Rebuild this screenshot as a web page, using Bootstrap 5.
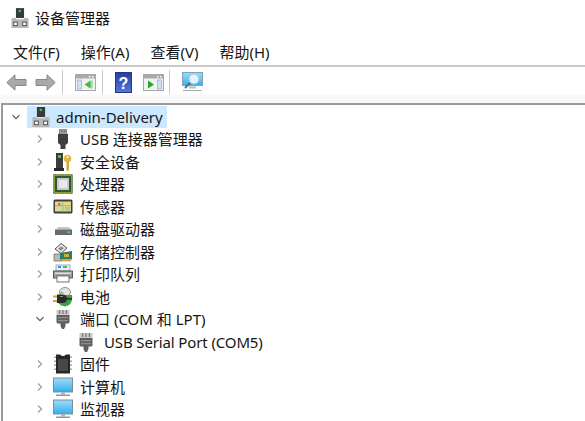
<!doctype html>
<html lang="zh"><head><meta charset="utf-8">
<link href="https://cdn.jsdelivr.net/npm/bootstrap@5.3.0/dist/css/bootstrap.min.css" rel="stylesheet">
<style>
html,body{margin:0;height:421px;overflow:hidden;background:#fff}
body{font-family:"Noto Sans","Noto Sans CJK SC",sans-serif;color:#151515;font-size:15px;line-height:22px}
.titlebar{height:35px;padding-left:11px;gap:6px;font-size:15px}
.menubar{height:32px;padding-left:13px;padding-top:3px;gap:21px;font-size:15px;border-bottom:2px solid #c9c9c9}
.toolbar{height:28px;padding-left:6px;padding-top:2px}
.tool-gap{width:1px;height:24px;background:#c8c8c8}
.band{background:#f9f9f9;height:8px}
.treebox{margin-left:1px;border-top:2px solid #9a9a9a;border-left:2px solid #9a9a9a;height:320px;overflow:hidden;background:#fff;padding-top:.6px}
.treerow{height:22.5px;white-space:nowrap}
.chev{width:10px;height:10px;flex:none}
.lvl0{padding-left:8px}
.lvl1{padding-left:32px}
.lvl2{padding-left:73px}
.ico{flex:none;display:block}
.t-next{margin-left:8px;transform:scaleX(-1)}
.t-g1{margin-left:6px}
.t-a{margin-left:12px}
.t-g2{margin-left:6px}
.t-b{margin-left:11px}
.t-g3{margin-left:5px}
.slot{flex:none;width:20px;height:20px;display:block}
.lvl1 .slot{margin-left:8px}
.lbl{margin-left:7px}
.lvl2 .lbl{margin-left:8px;letter-spacing:-.13px}
.rootlbl{background:#cce8ff;height:22px;margin-left:6px;padding:0 4px;gap:5px}
</style></head><body>
<svg width="0" height="0" class="position-absolute">
<defs>
<linearGradient id="gm" x1="0" y1="0" x2="0" y2="1"><stop offset="0" stop-color="#9fdcfa"/><stop offset="1" stop-color="#35aeed"/></linearGradient>
<linearGradient id="gh" x1="0" y1="0" x2="0" y2="1"><stop offset="0" stop-color="#2a3f9e"/><stop offset="1" stop-color="#4f77d8"/></linearGradient>
<symbol id="host" viewBox="0 0 20 22"><path d="M5.500 0h9v11h-9z" fill="#3a3a3a"/><rect x="8.500" y="2" width="2.500" height="2.500" fill="#35d04a"/><path d="M1.500 11h4v1.500h9V11h4l1 1v10H.5V12z" fill="#b9b9b9"/><rect x="3" y="15.500" width="4" height="4" fill="#fff" stroke="#444"/><rect x="13" y="15.500" width="4" height="4" fill="#fff" stroke="#444"/></symbol>
<symbol id="usb" viewBox="0 0 20 20"><rect x="6.500" y="0" width="7" height="5" fill="#a8a8a8" stroke="#666" stroke-width=".7"/><rect x="8" y="1.500" width="1.500" height="1.500" fill="#555"/><rect x="10.700" y="1.500" width="1.500" height="1.500" fill="#555"/><path d="M5 5h10v9l-2.500 2v4h-5v-4L5 14z" fill="#3f3f3f"/></symbol>
<symbol id="sec" viewBox="0 0 20 20"><path d="M3 1h7v15H3z" fill="#3b3b3b"/><path d="M1 16h10v3H1z" fill="#2a2a2a"/><rect x="5" y="3" width="3" height="3" fill="#35d04a"/><circle cx="14.500" cy="6.500" r="3.800" fill="#e3b544"/><circle cx="14.500" cy="5" r="1" fill="#fff"/><path d="M13.500 9h2.400v9l-1.200 1.500-1.200-1.500z" fill="#d5a12f"/></symbol>
<symbol id="cpu" viewBox="0 0 20 20"><rect x=".5" y=".5" width="19" height="19" fill="#8a9a3c" stroke="#5d7a2f" stroke-dasharray="1 .6"/><rect x="2" y="2" width="16" height="16" fill="#2c5a33"/><rect x="4" y="4" width="12" height="12" fill="#c9c9c9"/><rect x="6" y="6" width="8" height="8" fill="#e8e8e8"/></symbol>
<symbol id="sensor" viewBox="0 0 20 20"><rect x=".5" y="2.500" width="19" height="14" rx="1.500" fill="#3f3f3f"/><rect x="2" y="4.500" width="16" height="10" fill="#e2d98c"/><path d="M2 8h16v1.200H2zM9 4.500h1.300v10H9z" fill="#9ac48c"/><rect x="5" y="6" width="2.500" height="2.500" fill="#e86a5f"/><rect x="12" y="10" width="5" height="3.500" fill="#9ccf9a"/></symbol>
<symbol id="disk" viewBox="0 0 20 20"><path d="M3 10.500Q3.500 8 6 8h9q2.500 0 3 2.500z" fill="#c4c4c4"/><path d="M2 10.500h17v5.500H2z" fill="#6a6a6a"/><rect x="14" y="12.300" width="3" height="1.800" fill="#3fd84e"/></symbol>
<symbol id="store" viewBox="0 0 20 20"><path d="M2 7l6-5.500L14 6l-6 5.500z" fill="#e5e5e5" stroke="#555"/><path d="M5 7l3-2.500L11 6l-3 2.500z" fill="#888"/><path d="M1 12h8v7H1z" fill="#b8b8b8" stroke="#666" stroke-width=".7"/><path d="M7 11l12-2v8.500H7z" fill="#29806a"/><rect x="11" y="12" width="5" height="3" fill="#d9a63a"/><path d="M8 17.500h10v1.800H8z" fill="#c9a34a"/></symbol>
<symbol id="printer" viewBox="0 0 20 20"><rect x="3" y="1" width="14" height="6" fill="#e9f0f6" stroke="#6d8aa5" stroke-width=".7"/><rect x="5" y="2" width="3" height="2" fill="#3a8de0"/><rect x="10" y="2" width="4" height="2" fill="#51b85f"/><rect x=".5" y="7" width="19" height="7" fill="#9c9c9c" stroke="#3f3f3f" stroke-width=".8"/><rect x="4" y="12" width="12" height="6" fill="#fff" stroke="#555" stroke-width=".8"/><rect x="2" y="8.500" width="16" height="1.500" fill="#dcdcdc"/></symbol>
<symbol id="batt" viewBox="0 0 20 20"><ellipse cx="12" cy="5" rx="5.500" ry="4.500" fill="#e4e4e4" stroke="#777" stroke-width=".8"/><path d="M4 8h15Q20.500 18 12 19.500 3 18 4 8z" fill="#38a23c"/><path d="M6 6.500l3-2 2 2z" fill="#55c25a"/><path d="M0 8.500h5v2H0zM0 13h5v2H0z" fill="#d3a43c"/><path d="M4 7.500h5q5 0 5 4.300t-5 4.300H4z" fill="#2a2a2a"/><path d="M14 11h5v1.600h-5z" fill="#2a2a2a"/><path d="M7 9h3v1H7z" fill="#888"/></symbol>
<symbol id="port" viewBox="0 0 20 20"><rect x="3.500" y="1" width="13" height="5" fill="#c9c9c9"/><path d="M6.200 1h1v4h-1zM9.500 1h1v4h-1zM12.800 1h1v4h-1z" fill="#666"/><path d="M3.500 6h13v7.500l-1 1H12.500v2.500L11 20H9l-1.500-3v-2.500H4.500l-1-1z" fill="#5f5f5f"/><rect x="5" y="8" width="10" height="1.300" fill="#8d8d8d"/><rect x="5" y="11" width="10" height="1.300" fill="#8d8d8d"/></symbol>
<symbol id="chip" viewBox="0 0 20 20"><path d="M3 .5h4q3 3 6 0h4v19H3z" fill="#262626"/><path d="M1 2.500h2v1.500H1zM1 6.500h2V8H1zM1 10.500h2V12H1zM1 14.500h2V16H1zM17 2.500h2v1.500h-2zM17 6.500h2V8h-2zM17 10.500h2V12h-2zM17 14.500h2V16h-2z" fill="#aaa"/><rect x="5" y="5" width="10" height="12" fill="#474747"/></symbol>
<symbol id="mon" viewBox="0 0 20 19"><rect x=".5" y=".5" width="19" height="14" fill="url(#gm)" stroke="#7b8f9d"/><path d="M8 15h4v2H8z" fill="#aab3ba"/><path d="M3 17h14v1.500H3z" fill="#8a9aa5"/></symbol>
<symbol id="win-l" viewBox="0 0 21 17"><rect x=".5" y=".5" width="20" height="16" fill="#f2f2f2" stroke="#a8a8a8"/><rect x="1" y="1" width="19" height="3.500" fill="#a9a9a9"/><rect x="14" y="2" width="1.500" height="1.500" fill="#fff"/><rect x="17" y="2" width="1.500" height="1.500" fill="#fff"/><rect x="2.500" y="6" width="4" height="9" fill="#cfe2f5" stroke="#7b98b8" stroke-width=".5"/><path d="M15 6.500h3v8h-3z" fill="#a9e0a9"/><path d="M15.500 6.500v8l-6-4z" fill="#3dbb3d"/></symbol>
<symbol id="win-r" viewBox="0 0 21 17"><rect x=".5" y=".5" width="20" height="16" fill="#f2f2f2" stroke="#a8a8a8"/><rect x="1" y="1" width="19" height="3.500" fill="#a9a9a9"/><rect x="14" y="2" width="1.500" height="1.500" fill="#fff"/><rect x="17" y="2" width="1.500" height="1.500" fill="#fff"/><rect x="14.500" y="6" width="4" height="9" fill="#cfe2f5" stroke="#7b98b8" stroke-width=".5"/><path d="M5 6.500v8l6-4z" fill="#27a827"/></symbol>
<symbol id="scan" viewBox="0 0 21 20"><rect x=".5" y=".5" width="20" height="13" fill="url(#gm)" stroke="#7da4bd"/><circle cx="12" cy="7" r="5" fill="#e2f4fc" stroke="#a9c6d6" stroke-width="1"/><path d="M8 11l-5 5" stroke="#666" stroke-width="1.800"/><path d="M7 14.500h7v2H7z" fill="#b5bcc2"/><path d="M1 18h19v1H1z" fill="#a3adb5"/></symbol>
<symbol id="arrow" viewBox="0 0 21 17"><path d="M.8 8.500L9 .8v4.700h11v6H9v4.700z" fill="#a9a9a9" stroke="#888"/></symbol>
<symbol id="chevr" viewBox="0 0 10 10"><path d="M3 1.500L6.500 5 3 8.500" fill="none" stroke="#a0a0a0" stroke-width="1.300"/></symbol>
<symbol id="chevd" viewBox="0 0 10 10"><path d="M1.500 3.200L5 6.700l3.500-3.500" fill="none" stroke="#555" stroke-width="1.200"/></symbol>
</defs></svg>

<header class="titlebar d-flex align-items-center">
<svg class="ico" width="18" height="20"><use href="#host"/></svg><span>设备管理器</span></header>
<nav class="menubar d-flex align-items-center"><span>文件(F)</span><span>操作(A)</span><span>查看(V)</span><span>帮助(H)</span></nav>
<div class="toolbar d-flex align-items-center">
<svg class="ico" width="21" height="17"><use href="#arrow"/></svg>
<svg class="ico t-next" width="21" height="17"><use href="#arrow"/></svg>
<span class="tool-gap t-g1"></span>
<svg class="ico t-a" width="21" height="17"><use href="#win-l"/></svg>
<span class="tool-gap t-g2"></span>
<svg class="ico t-a" width="17" height="21" viewBox="0 0 17 21"><rect width="17" height="21" fill="#223690"/><rect x="1" y="1" width="15" height="19" fill="url(#gh)"/><text x="8.500" y="16.500" text-anchor="middle" font-size="16" font-weight="700" fill="#fff" font-family="Liberation Sans,sans-serif">?</text></svg>
<svg class="ico t-b" width="21" height="17"><use href="#win-r"/></svg>
<span class="tool-gap t-g3"></span>
<svg class="ico t-a" width="21" height="20"><use href="#scan"/></svg>
</div>
<div class="band"></div>
<main class="treebox">
<div class="treerow lvl0 d-flex align-items-center"><svg class="chev"><use href="#chevd"/></svg><div class="rootlbl d-flex align-items-center"><svg class="slot"><use href="#host"/></svg><span>admin-Delivery</span></div></div>
<div class="treerow lvl1 d-flex align-items-center"><svg class="chev"><use href="#chevr"/></svg><svg class="slot"><use href="#usb"/></svg><span class="lbl">USB 连接器管理器</span></div>
<div class="treerow lvl1 d-flex align-items-center"><svg class="chev"><use href="#chevr"/></svg><svg class="slot"><use href="#sec"/></svg><span class="lbl">安全设备</span></div>
<div class="treerow lvl1 d-flex align-items-center"><svg class="chev"><use href="#chevr"/></svg><svg class="slot"><use href="#cpu"/></svg><span class="lbl">处理器</span></div>
<div class="treerow lvl1 d-flex align-items-center"><svg class="chev"><use href="#chevr"/></svg><svg class="slot"><use href="#sensor"/></svg><span class="lbl">传感器</span></div>
<div class="treerow lvl1 d-flex align-items-center"><svg class="chev"><use href="#chevr"/></svg><svg class="slot"><use href="#disk"/></svg><span class="lbl">磁盘驱动器</span></div>
<div class="treerow lvl1 d-flex align-items-center"><svg class="chev"><use href="#chevr"/></svg><svg class="slot"><use href="#store"/></svg><span class="lbl">存储控制器</span></div>
<div class="treerow lvl1 d-flex align-items-center"><svg class="chev"><use href="#chevr"/></svg><svg class="slot"><use href="#printer"/></svg><span class="lbl">打印队列</span></div>
<div class="treerow lvl1 d-flex align-items-center"><svg class="chev"><use href="#chevr"/></svg><svg class="slot"><use href="#batt"/></svg><span class="lbl">电池</span></div>
<div class="treerow lvl1 d-flex align-items-center"><svg class="chev"><use href="#chevd"/></svg><svg class="slot"><use href="#port"/></svg><span class="lbl">端口 (COM 和 LPT)</span></div>
<div class="treerow lvl2 d-flex align-items-center"><svg class="slot"><use href="#port"/></svg><span class="lbl">USB Serial Port (COM5)</span></div>
<div class="treerow lvl1 d-flex align-items-center"><svg class="chev"><use href="#chevr"/></svg><svg class="slot"><use href="#chip"/></svg><span class="lbl">固件</span></div>
<div class="treerow lvl1 d-flex align-items-center"><svg class="chev"><use href="#chevr"/></svg><svg class="slot"><use href="#mon"/></svg><span class="lbl">计算机</span></div>
<div class="treerow lvl1 d-flex align-items-center"><svg class="chev"><use href="#chevr"/></svg><svg class="slot"><use href="#mon"/></svg><span class="lbl">监视器</span></div>
</main>
</body></html>
